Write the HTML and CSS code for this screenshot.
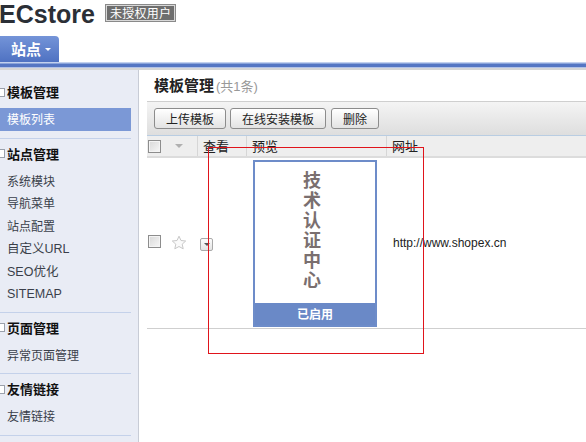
FILE: index.html
```html
<!DOCTYPE html>
<html lang="zh">
<head>
<meta charset="utf-8">
<link rel="stylesheet" href="styles.css">
</head>
<body>
<header class="top">
  <div class="brand">
    <span class="logo">ECstore</span>
    <span class="badge">未授权用户</span>
  </div>
  <nav class="tabs">
    <span class="tab">站点 <span class="caret"></span></span>
  </nav>
  <div class="bar"></div>
</header>
<div class="layout">
  <aside class="side">
    <section class="group">
      <h3 class="gh"><span class="fold"></span>模板管理</h3>
      <ul class="items">
        <li class="item active">模板列表</li>
      </ul>
    </section>
    <section class="group">
      <h3 class="gh"><span class="fold"></span>站点管理</h3>
      <ul class="items">
        <li class="item">系统模块</li>
        <li class="item">导航菜单</li>
        <li class="item">站点配置</li>
        <li class="item">自定义URL</li>
        <li class="item">SEO优化</li>
        <li class="item">SITEMAP</li>
      </ul>
    </section>
    <section class="group">
      <h3 class="gh"><span class="fold"></span>页面管理</h3>
      <ul class="items">
        <li class="item">异常页面管理</li>
      </ul>
    </section>
    <section class="group">
      <h3 class="gh"><span class="fold"></span>友情链接</h3>
      <ul class="items">
        <li class="item">友情链接</li>
      </ul>
    </section>
  </aside>
  <main class="main">
    <h2 class="title">模板管理<span class="count">(共1条)</span></h2>
    <div class="toolbar">
      <button class="btn">上传模板</button>
      <button class="btn">在线安装模板</button>
      <button class="btn">删除</button>
    </div>
    <div class="grid head">
      <div class="c1"><span class="cb"></span><span class="harrow"></span></div>
      <div class="c2">查看</div>
      <div class="c3">预览</div>
      <div class="c4">网址</div>
    </div>
    <div class="grid row">
      <div class="c1"><span class="cb"></span>
        <svg class="star" width="16" height="16" viewBox="0 0 16 16"><path d="M8 1.2l2 4.3 4.7.5-3.5 3.2 1 4.6L8 11.5l-4.2 2.3 1-4.6L1.3 6l4.7-.5z" fill="#fafafa" stroke="#c8c8c8" stroke-width="1"/></svg>
      </div>
      <div class="c2"><span class="dd"></span></div>
      <div class="c3">
        <div class="card">
          <div class="thumb">技术认证中心</div>
          <div class="state">已启用</div>
        </div>
      </div>
      <div class="c4 url">http://www.shopex.cn</div>
    </div>
  </main>
</div>
<div class="mark"></div>
</body>
</html>
```
FILE: styles.css
```css
* { box-sizing: border-box; }
html, body { margin: 0; padding: 0; }
body {
  width: 586px; height: 442px; overflow: hidden; background: #fff;
  font-family: "Liberation Sans", "Noto Sans CJK SC", sans-serif;
  font-size: 13px; color: #333; position: relative;
}
ul { list-style: none; margin: 0; padding: 0; }
h2, h3 { margin: 0; }

.top { height: 70px; }
.brand { display: flex; align-items: center; height: 28px; }
.logo { font: bold 25px/28px "Liberation Sans", sans-serif; color: #2b2f36; margin-left: -1px; }
.badge {
  margin-left: 10px; height: 18px; padding: 0 4px; margin-top: -3px;
  font: 12px/16px "Noto Sans CJK SC", sans-serif; color: #fff; letter-spacing: 0.3px;
  background: #6e6e6e; border: 1px solid #8a8a8a; box-shadow: inset 0 0 0 1px #d8d8d8;
}
.tabs { height: 34px; display: flex; align-items: flex-end; }
.tab {
  width: 59px; height: 26px; padding-left: 11px;
  background: linear-gradient(#7494d8, #4f72c2);
  border-radius: 0 4px 0 0; color: #fff;
  font: bold 15px/26px "Noto Sans CJK SC", sans-serif;
  display: flex; align-items: center; gap: 4px;
}
.caret { width: 0; height: 0; border: 3px solid transparent; border-top: 3px solid #fff; margin-top: 4px; }
.bar {
  height: 8px;
  background: linear-gradient(#c3d1ee 0 1px, #8ba4da 1px 2px, #5576c3 2px 5px, #b2c2e6 5px 6px, #d6d6d6 6px 8px);
}

.layout { display: flex; height: 372px; }
.side {
  width: 139px; flex: none; background: #e9ecf5; border-right: 1px solid #c8ccd6;
  padding: 6px 7px 0 0;
}
.group { border-bottom: 1px solid #c4d1ea; padding: 4px 0 7px; }
.group:first-child { padding-top: 5px; }
.gh {
  display: flex; align-items: center; height: 22px;
  font: bold 13px/22px "Noto Sans CJK SC", sans-serif; color: #111;
}
.fold {
  width: 9px; height: 9px; margin-left: -4px; margin-right: 2px;
  border: 1px solid #9aa0ab; background: #fff;
}
.items { margin-top: 5px; }
.item {
  height: 22.5px; line-height: 22px; padding-left: 7px; font-size: 12px;
  font-family: "Noto Sans CJK SC", sans-serif; color: #3a3f4a;
}
.item:nth-child(n+4) { font-family: "Liberation Sans", "Noto Sans CJK SC", sans-serif; font-size: 12.5px; line-height: 24px; }
.item.active { background: #7b98d6; color: #fff; }

.main { flex: 1; padding: 2px 0 0 8px; }
.title {
  height: 29px; padding-left: 7px;
  font: bold 15px/25px "Noto Sans CJK SC", sans-serif; color: #222;
}
.count { font: normal 13px/25px "Liberation Sans", "Noto Sans CJK SC", sans-serif; color: #999; margin-left: 2px; }
.toolbar {
  height: 34px; border-top: 1px solid #cfcfcf;
  background: linear-gradient(#f4f4f4, #dedede);
  display: flex; align-items: center; gap: 4px; padding-left: 7px;
}
.btn {
  height: 21px; padding: 0 11px; margin: 0;
  border: 1px solid #8c8c8c; border-radius: 3px;
  background: linear-gradient(#ffffff, #e3e3e3);
  font: 12px/19px "Noto Sans CJK SC", sans-serif; color: #222;
}
.btn:nth-child(3) { margin-left: 1px; }

.grid { display: grid; grid-template-columns: 51px 49px 140px 1fr; }
.head {
  height: 23px; background: #eee; border-top: 1px solid #b9cde2; border-bottom: 2px solid #dcdcdc;
  font: 13px/20px "Noto Sans CJK SC", sans-serif; color: #222;
}
.head > div { border-right: 1px solid #d6d6d6; padding-left: 5px; display: flex; align-items: center; }
.head > .c1 { padding-left: 1px; gap: 14px; }
.head > .c4 { border-right: 0; }
.cb {
  width: 13px; height: 13px; flex: none; border: 1px solid #8d8d8d;
  background: linear-gradient(135deg, #d8d8d8, #f7f7f7);
  box-shadow: inset 0 0 0 1px #f4f4f4;
}
.harrow { width: 0; height: 0; border: 4px solid transparent; border-top: 4px solid #b0b0b0; margin-top: 4px; }

.row { height: 171px; border-bottom: 1px solid #cfcfcf; }
.row > div { display: flex; align-items: center; }
.row > .c1 { padding-left: 1px; gap: 10px; padding-bottom: 4px; }
.star { margin-top: 3px; }
.row > .c2 { padding-left: 2px; padding-top: 2px; }
.dd {
  width: 13px; height: 13px; border: 1px solid #aaa; border-radius: 2px;
  background: linear-gradient(#fdfdfd, #e4e4e4); position: relative;
}
.dd::after {
  content: ""; position: absolute; left: 3px; top: 4px;
  border: 3px solid transparent; border-top: 3px solid #555;
}
.row > .c3 { padding-left: 6px; align-items: flex-start; padding-top: 2px; }
.card { width: 124px; height: 167px; border: 2px solid #6d8cc9; display: flex; flex-direction: column; }
.thumb {
  flex: 1; background: #fff; writing-mode: vertical-rl; text-orientation: upright;
  font: 600 18px/20px "Noto Sans CJK SC", sans-serif; color: #7a6f6f;
  display: flex; align-items: center; justify-content: flex-start;
  padding-top: 9px; padding-right: 6px; letter-spacing: 2px;
}
.state {
  height: 22px; background: #6a89c7; color: #fff; text-align: center;
  font: bold 12px/22px "Noto Sans CJK SC", sans-serif;
}
.url { padding-left: 6px; font: 12px/16px "Liberation Sans", sans-serif; color: #222; padding-bottom: 1px; }

.mark {
  position: absolute; left: 208px; top: 147px; width: 216px; height: 207px;
  border: 1px solid #e0141b;
}
```
